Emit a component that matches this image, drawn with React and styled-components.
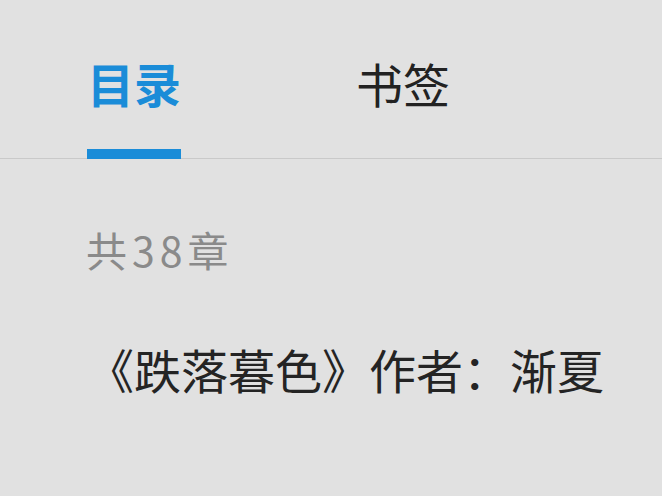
import React, { useState } from 'react'
import styled, { createGlobalStyle } from 'styled-components'

const GlobalStyle = createGlobalStyle`
  html, body {
    margin: 0;
    padding: 0;
    background: #e1e1e1;
  }
  body {
    font-family: "Noto Sans CJK SC", "Noto Sans", sans-serif;
  }
`

const Page = styled.div`
  width: 662px;
  height: 496px;
  background: #e1e1e1;
  overflow: hidden;
`

const TabBar = styled.div`
  display: flex;
  align-items: flex-end;
  gap: 175px;
  padding: 0 0 0 87px;
  height: 159px;
  border-bottom: 1px solid #c9c9c9;
  box-sizing: border-box;
`

const Tab = styled.div`
  display: flex;
  flex-direction: column;
  align-items: center;
  font-size: 47px;
  line-height: 1;
  font-weight: ${p => (p.active ? 700 : 400)};
  color: ${p => (p.active ? '#1a8cd8' : '#222')};
  cursor: pointer;

  &::after {
    content: "";
    display: block;
    width: 100%;
    height: 10px;
    margin-top: 43px;
    margin-bottom: -1px;
    background: ${p => (p.active ? '#1a8cd8' : 'transparent')};
  }
`

const Content = styled.div`
  padding: 70px 0 0 86px;
  display: flex;
  flex-direction: column;
`

const Count = styled.div`
  font-size: 41px;
  line-height: 1;
  letter-spacing: 5px;
  color: #8a8a8a;
`

const Title = styled.div`
  margin-top: 75px;
  padding-left: 1px;
  font-size: 47px;
  line-height: 1;
  color: #242424;
  white-space: nowrap;
`

export default function App() {
  const [tab, setTab] = useState(0)
  const tabs = ['目录', '书签']

  return (
    <Page>
      <GlobalStyle />
      <TabBar>
        {tabs.map((t, i) => (
          <Tab key={t} active={tab === i} onClick={() => setTab(i)}>
            {t}
          </Tab>
        ))}
      </TabBar>
      <Content>
        <Count>共38章</Count>
        <Title>《跌落暮色》作者：渐夏</Title>
      </Content>
    </Page>
  )
}
